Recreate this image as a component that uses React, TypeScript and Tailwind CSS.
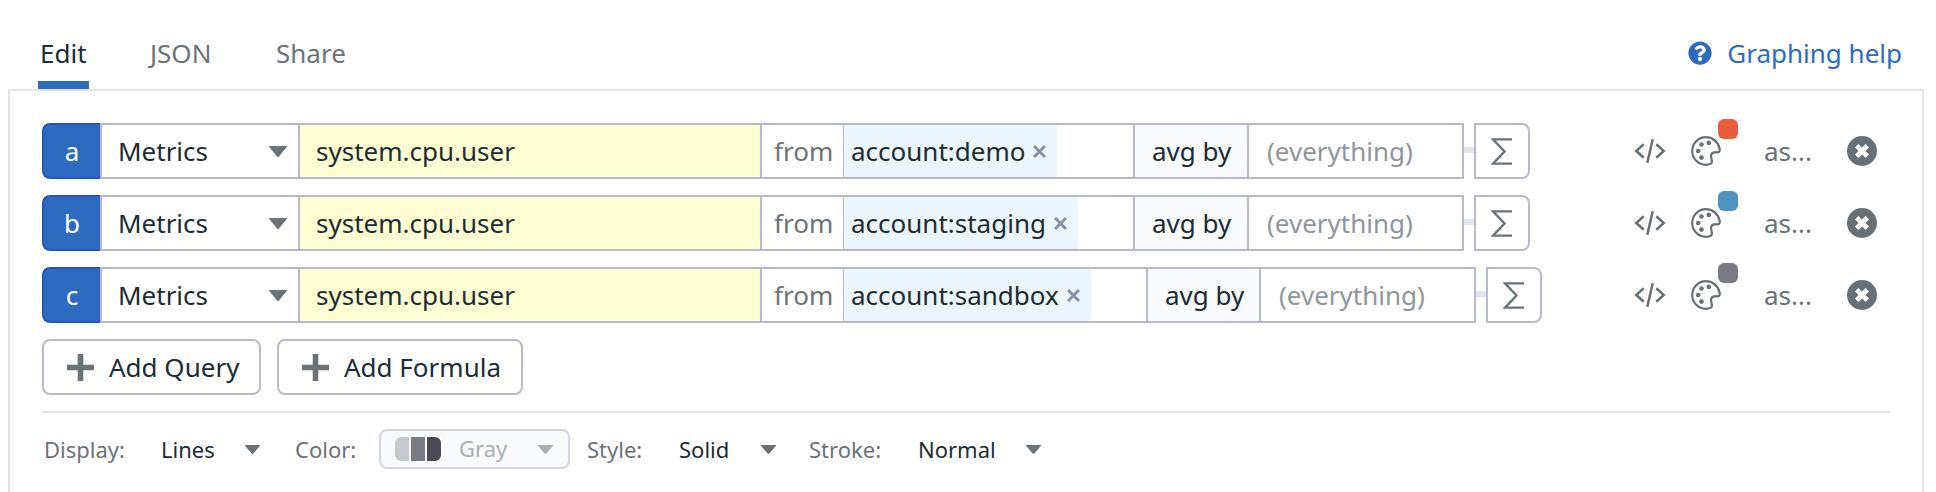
import React from "react";
import { FaQuestionCircle } from "react-icons/fa";

type Query = {
  letter: string;
  tag: string;
  tagWidth: string;
  scopeWidth: string;
  avgWidth: string;
  swatch: string;
};

const queries: Query[] = [
  { letter: "a", tag: "account:demo", tagWidth: "w-[213px]", scopeWidth: "w-[290px]", avgWidth: "w-[114px]", swatch: "bg-[#e85c3b]" },
  { letter: "b", tag: "account:staging", tagWidth: "w-[234px]", scopeWidth: "w-[290px]", avgWidth: "w-[114px]", swatch: "bg-[#4f93c0]" },
  { letter: "c", tag: "account:sandbox", tagWidth: "w-[247px]", scopeWidth: "w-[303px]", avgWidth: "w-[113px]", swatch: "bg-[#7b7b86]" },
];

function Caret({ className }: { className: string }) {
  return (
    <svg viewBox="0 0 18 11" preserveAspectRatio="none" className={className} fill="currentColor">
      <path d="M.6 0h16.800c.6 0 .8.7.4 1.100L10 10.400a1.400 1.400 0 0 1-2 0L.2 1.100C-.2.700 0 0 .6 0z" />
    </svg>
  );
}

function CodeIcon() {
  return (
    <svg viewBox="0 0 32 24" className="h-6 w-8" fill="none" stroke="currentColor" strokeWidth="2.500">
      <path d="M9.700 5.300 2.300 12l7.400 6.700M22.300 5.300l7.400 6.700-7.400 6.700M18.700.200l-5.400 23.600" />
    </svg>
  );
}

function PaletteIcon() {
  return (
    <svg viewBox="0 0 30 30" className="size-[30px]" fill="none">
      <path
        d="M15 1.200C7.300 1.200 1.200 7.300 1.200 15S7.300 28.800 15 28.800c1.800 0 3.400-.3 4.500-.9 1.300-.7 1.600-1.900 1.300-3.500-.4-2.100-1.100-4-.6-5.700.5-1.600 1.700-2.300 3.400-2.300 1.500 0 2.800.1 3.900-.3 1.100-.4 1.500-1.300 1.200-3C27.600 6.200 21.900 1.200 15 1.200z"
        stroke="currentColor"
        strokeWidth="2.200"
      />
      <g fill="currentColor">
        <circle cx="10.500" cy="8.500" r="2.300" />
        <circle cx="17.800" cy="6.900" r="2.300" />
        <circle cx="7.200" cy="15" r="2.300" />
        <circle cx="10.500" cy="21.600" r="2.300" />
      </g>
    </svg>
  );
}

function CloseIcon() {
  return (
    <svg viewBox="0 0 30 30" className="size-[30px]">
      <circle cx="15" cy="15" r="15" fill="currentColor" />
      <path d="m9.700 9.700 10.600 10.600M20.300 9.700 9.700 20.300" stroke="white" strokeWidth="4.800" />
    </svg>
  );
}

function PlusIcon() {
  return (
    <svg viewBox="0 0 27 27" className="size-[27px] text-[#6b7278]" stroke="currentColor" strokeWidth="5.600">
      <path d="M13.500 0v27M0 13.500h27" />
    </svg>
  );
}

function QueryRow({ q }: { q: Query }) {
  return (
    <div className="flex h-14 items-stretch">
      <div className="flex w-[58px] items-center justify-center rounded-l-lg border-2 border-r-0 border-[#2456b8] bg-[#2d6bc0] text-white">
        {q.letter}
      </div>
      <div className="flex w-[198px] items-center justify-between border-2 border-r-0 border-[#b8bacb] pr-[11px] pl-4">
        <span>Metrics</span>
        <Caret className="h-[11px] w-[18px] text-[#6b7278]" />
      </div>
      <div className="flex w-[462px] items-center border-2 border-r-0 border-[#b8bacb] bg-[#feffd2] pl-4">
        system.cpu.user
      </div>
      <div className="flex w-[83px] items-center border-2 border-r-0 border-[#b8bacb] pl-3 text-[#6b7278]">
        from
      </div>
      <div className={"flex border-y-2 border-l border-[#b8bacb] " + q.scopeWidth}>
        <div className={"flex items-center gap-2 bg-[#ecf5fc] pl-[7px] " + q.tagWidth}>
          <span>{q.tag}</span>
          <svg viewBox="0 0 13 13" className="mt-px size-[13px] text-[#8b8fa9]" stroke="currentColor" strokeWidth="3">
            <path d="m1 1 11 11M12 1 1 12" />
          </svg>
        </div>
      </div>
      <div className={"flex items-center border-2 border-r-0 border-[#b8bacb] bg-[#f9fafc] pl-[17px] " + q.avgWidth}>
        avg by
      </div>
      <div className="flex w-[217px] items-center border-2 border-[#b8bacb] pl-[18px] text-[#91969b]">
        (everything)
      </div>
      <div className="mt-6 h-1.5 w-2.5 bg-[#e2e4ed]" />
      <div className="flex w-14 items-center justify-center rounded-r-lg border-2 border-[#b8bacb]">
        <svg viewBox="0 0 22 27" className="h-[27px] w-[22px] text-[#6b7278]" fill="none" stroke="currentColor" strokeWidth="2.400">
          <path d="M21 1.400H2L13.500 13.500 2 25.600h19" />
        </svg>
      </div>
      <div className="ml-auto flex items-center text-[#687076]">
        <CodeIcon />
        <div className="relative ml-[25px]">
          <PaletteIcon />
          <span className={"absolute -top-[17px] left-[27px] size-5 rounded-[6px] " + q.swatch} />
        </div>
        <span className="ml-[43px] w-[83px]">as...</span>
        <div className="mr-[13px]">
          <CloseIcon />
        </div>
      </div>
    </div>
  );
}

function AddButton({ label, width }: { label: string; width: string }) {
  return (
    <button className={"flex h-14 items-center gap-[15px] rounded-lg border-2 border-[#b8bacb] pl-[23px] " + width}>
      <PlusIcon />
      <span>{label}</span>
    </button>
  );
}

function Option({ label, value, labelWidth, width }: { label: string; value: string; labelWidth: string; width: string }) {
  return (
    <div className={"flex items-center " + width}>
      <span className={"text-[#6b7278] " + labelWidth}>{label}</span>
      <span className="grow">{value}</span>
      <Caret className="h-[9px] w-[15px] text-[#6b7278]" />
    </div>
  );
}

export default function App() {
  return (
    <div className="flex h-[492px] flex-col overflow-hidden bg-white font-['Noto_Sans',sans-serif] text-[26px] leading-9 whitespace-nowrap text-[#202c34]">
      <header className="flex h-[89px] shrink-0 pr-[34px] pl-[38px] text-[#6b7278]">
        <div className="flex w-[51px] flex-col justify-between pt-[35px] text-[#202c34]">
          <span className="pl-0.5">Edit</span>
          <div className="h-2 bg-[#2d6bc0]" />
        </div>
        <div className="ml-[61px] w-[126px] pt-[35px]">JSON</div>
        <div className="pt-[35px]">Share</div>
        <div className="ml-auto flex items-center gap-[15px] pt-[17px] text-[#2d6bc0]">
          <FaQuestionCircle className="size-6" />
          <span>Graphing help</span>
        </div>
      </header>
      <main className="mr-3 ml-2 flex h-[420px] shrink-0 flex-col border-2 border-[#e1e4ea] px-8 pt-8">
        <div className="flex flex-col gap-4">
          {queries.map((q) => (
            <QueryRow key={q.letter} q={q} />
          ))}
          <div className="flex gap-4">
            <AddButton label="Add Query" width="w-[219px]" />
            <AddButton label="Add Formula" width="w-[246px]" />
          </div>
        </div>
        <div className="mt-4 flex h-[58px] items-end border-t-2 border-[#e1e4ea] text-[22px]">
          <div className="flex h-10 items-center">
            <Option label="Display:" value="Lines" labelWidth="w-[119px] pl-0.5" width="w-[218px]" />
            <span className="ml-[35px] w-[84px] text-[#6b7278]">Color:</span>
            <div className="flex h-10 w-[191px] items-center rounded-lg border-2 border-[#d3d5df] bg-[#f9fafc] pr-[15px] pl-[14px] text-[#a9afb1]">
              <div className="flex h-6 w-[46px] gap-0.5 overflow-hidden rounded-md bg-white ring-2 ring-white">
                <span className="grow bg-[#c5cace]" />
                <span className="grow bg-[#7b7b86]" />
                <span className="grow bg-[#4c4a55]" />
              </div>
              <span className="mb-0.5 ml-[18px] grow">Gray</span>
              <Caret className="h-[9px] w-[15px]" />
            </div>
            <Option label="Style:" value="Solid" labelWidth="ml-[17px] w-[92px]" width="w-[206px]" />
            <Option label="Stroke:" value="Normal" labelWidth="ml-[33px] w-[109px]" width="w-[265px]" />
          </div>
        </div>
      </main>
    </div>
  );
}
